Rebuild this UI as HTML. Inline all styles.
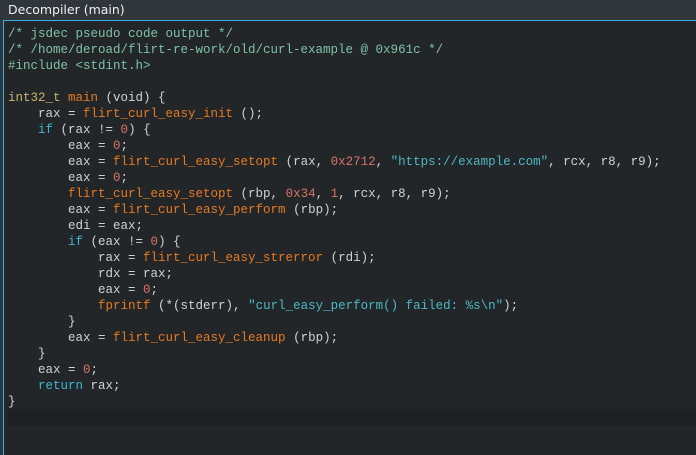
<!DOCTYPE html>
<html><head><style>
body{margin:0;width:696px;height:455px;background:#31363b;overflow:hidden;font-family:"DejaVu Sans",sans-serif}
.t{position:absolute;left:0;top:0;width:696px;height:20px;background:#31363b;color:#eff0f1;font-size:12.5px;line-height:20px;padding-left:8px;box-sizing:border-box}
.ed{position:absolute;left:3px;top:20px;width:693px;height:435px;background:#232629;border-top:1px solid #3daee9;border-left:1px solid #3daee9;box-sizing:border-box}
.hl{position:absolute;left:4px;right:0;top:388px;height:16px;background:#1d2123}
pre{position:absolute;left:4px;top:5px;margin:0;font-family:"Liberation Mono",monospace;font-size:12.5px;line-height:16px;color:#d0d2d3}
.c{color:#7fc2a6}.f{color:#e57a1f}.n{color:#dc7466}.s{color:#4cb8c4}.k{color:#3fb7d0}.y{color:#c9b56a}
</style></head><body>
<div class="t">Decompiler (main)</div>
<div class="ed"><div class="hl"></div>
<pre><span class="c">/* jsdec pseudo code output */
/* /home/deroad/flirt-re-work/old/curl-example @ 0x961c */
#include &lt;stdint.h&gt;</span>

<span class="y">int32_t</span> <span class="f">main</span> (void) {
    rax = <span class="f">flirt_curl_easy_init</span> ();
    <span class="k">if</span> (rax != <span class="n">0</span>) {
        eax = <span class="n">0</span>;
        eax = <span class="f">flirt_curl_easy_setopt</span> (rax, <span class="n">0x2712</span>, <span class="s">"https://example.com"</span>, rcx, r8, r9);
        eax = <span class="n">0</span>;
        <span class="f">flirt_curl_easy_setopt</span> (rbp, <span class="n">0x34</span>, <span class="n">1</span>, rcx, r8, r9);
        eax = <span class="f">flirt_curl_easy_perform</span> (rbp);
        edi = eax;
        <span class="k">if</span> (eax != <span class="n">0</span>) {
            rax = <span class="f">flirt_curl_easy_strerror</span> (rdi);
            rdx = rax;
            eax = <span class="n">0</span>;
            <span class="f">fprintf</span> (*(stderr), <span class="s">"curl_easy_perform() failed: %s\n"</span>);
        }
        eax = <span class="f">flirt_curl_easy_cleanup</span> (rbp);
    }
    eax = <span class="n">0</span>;
    <span class="k">return</span> rax;
}</pre></div>
</body></html>
